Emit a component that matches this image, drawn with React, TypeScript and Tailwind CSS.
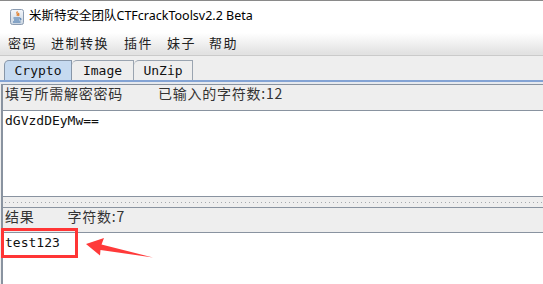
import React from "react";

const cjk = { fontFamily: '"Noto Sans CJK SC", "Noto Sans", sans-serif' };
const mono = { fontFamily: '"DejaVu Sans Mono", "Liberation Mono", monospace' };

function JavaIcon() {
  return (
    <svg width="16" height="16" viewBox="0 0 16 16">
      <defs>
        <linearGradient id="jg" x1="0" y1="0" x2="0" y2="1">
          <stop offset="0" stopColor="#f4f7fb" />
          <stop offset="1" stopColor="#c9d4e0" />
        </linearGradient>
      </defs>
      <rect x="1.5" y="0.5" width="13" height="15" rx="2" fill="url(#jg)" stroke="#8b9bb0" />
      <path d="M8.5 2.5c-2 1.5 1 2.5-0.5 4.5M10 4c-1 1 0.5 1.5-0.5 3" stroke="#e07820" strokeWidth="1.2" fill="none" />
      <path d="M4.5 9h6.5M5 11h5.5M4 13h7.5" stroke="#3b6ea8" strokeWidth="1.1" fill="none" />
      <path d="M11 9.2c1.6 0 1.6 1.8 0 1.8" stroke="#3b6ea8" strokeWidth="0.9" fill="none" />
    </svg>
  );
}

export default function App() {
  return (
    <div className="relative w-[543px] h-[284px] overflow-hidden bg-[#eeeeee] flex flex-col">
      {/* Title bar */}
      <div className="h-[30px] shrink-0 border-t border-[#8a8a8a] bg-white flex items-center pl-[9px] pt-[2px]">
        <JavaIcon />
        <span
          className="ml-[4px] text-[12.5px] text-black leading-none"
          style={{ fontFamily: '"Noto Sans", "Noto Sans CJK SC", sans-serif' }}
        >
          米斯特安全团队CTFcrackToolsv2.2 Beta
        </span>
      </div>

      {/* Menu bar */}
      <div
        className="h-[26px] shrink-0 border-b border-[#cacaca] bg-[linear-gradient(to_bottom,#ffffff_0%,#ffffff_12%,#e2e2e2_92%,#e2e2e2_100%)] flex items-center text-[13px] tracking-[1.5px] text-[#222]"
        style={cjk}
      >
        <span className="ml-[8px]">密码</span>
        <span className="ml-[14px]">进制转换</span>
        <span className="ml-[15px]">插件</span>
        <span className="ml-[14px]">妹子</span>
        <span className="ml-[13px]">帮助</span>
      </div>

      {/* Tabs */}
      <div className="h-[24px] shrink-0 flex items-end pl-[4px]">
        <div
          className="w-[68px] h-[20px] rounded-tl-[5px] border-l border-t border-r border-[#8796a8] bg-[#c6daf0] flex items-center justify-center text-[13px] text-[#111]"
          style={mono}
        >
          Crypto
        </div>
        <div
          className="w-[62px] h-[20px] rounded-tl-[5px] border-t border-r border-[#9aa4b0] bg-[#eeeeee] flex items-center justify-center text-[13px] text-[#111]"
          style={mono}
        >
          Image
        </div>
        <div
          className="w-[59px] h-[20px] rounded-tl-[5px] border-t border-r border-[#9aa4b0] bg-[#eeeeee] flex items-center justify-center text-[13px] text-[#111]"
          style={mono}
        >
          UnZip
        </div>
      </div>
      <div className="h-[2px] shrink-0 bg-[#83a3d4]" />
      <div className="h-[2px] shrink-0 bg-[#e6e9ee]" />

      {/* Content panel */}
      <div className="flex-1 flex flex-col ml-px border-l-2 border-[#8993a0]">
        <div className="h-px shrink-0 bg-[#8993a0]" />
        <div
          className="h-[25px] shrink-0 flex items-start pl-[2px] text-[14px] tracking-[0.75px] leading-[17px] text-[#333]"
          style={cjk}
        >
          <span>填写所需解密密码</span>
          <span className="ml-[35px]">已输入的字符数:12</span>
        </div>
        <div className="h-px shrink-0 bg-[#8993a0]" />
        <div className="h-[85px] shrink-0 bg-white pl-[2px] pt-[1px] text-[13px] leading-[17px] text-[#111]" style={mono}>
          dGVzdDEyMw==
        </div>
        <div className="h-px shrink-0 bg-[#8993a0]" />
        <div className="h-[10px] shrink-0 flex items-center pl-[2px]">
          <div className="w-full h-px bg-[linear-gradient(to_right,#a5a9ae_1px,transparent_1px)] bg-[length:4px_1px]" />
        </div>
        <div className="h-px shrink-0 bg-[#8993a0]" />
        <div
          className="h-[24px] shrink-0 flex items-start pl-[2px] text-[14px] tracking-[0.75px] leading-[17px] text-[#333]"
          style={cjk}
        >
          <span>结果</span>
          <span className="ml-[33px]">字符数:7</span>
        </div>
        <div className="h-px shrink-0 bg-[#8993a0]" />
        <div className="flex-1 bg-white pl-[2px] pt-[1px] text-[13px] leading-[17px] text-[#111]" style={mono}>
          test123
        </div>
      </div>

      {/* Annotation: red box */}
      <div className="absolute left-[1px] top-[228px] w-[77px] h-[30px] border-[3px] border-[#ff3535]" />
      {/* Annotation: arrow */}
      <svg className="absolute left-0 top-0" width="543" height="284" viewBox="0 0 543 284">
        <polygon
          points="86,244 104,238 101.5,244.5 153,257.5 100.5,250 100,255.5"
          fill="#ff3a3a"
        />
      </svg>
    </div>
  );
}
